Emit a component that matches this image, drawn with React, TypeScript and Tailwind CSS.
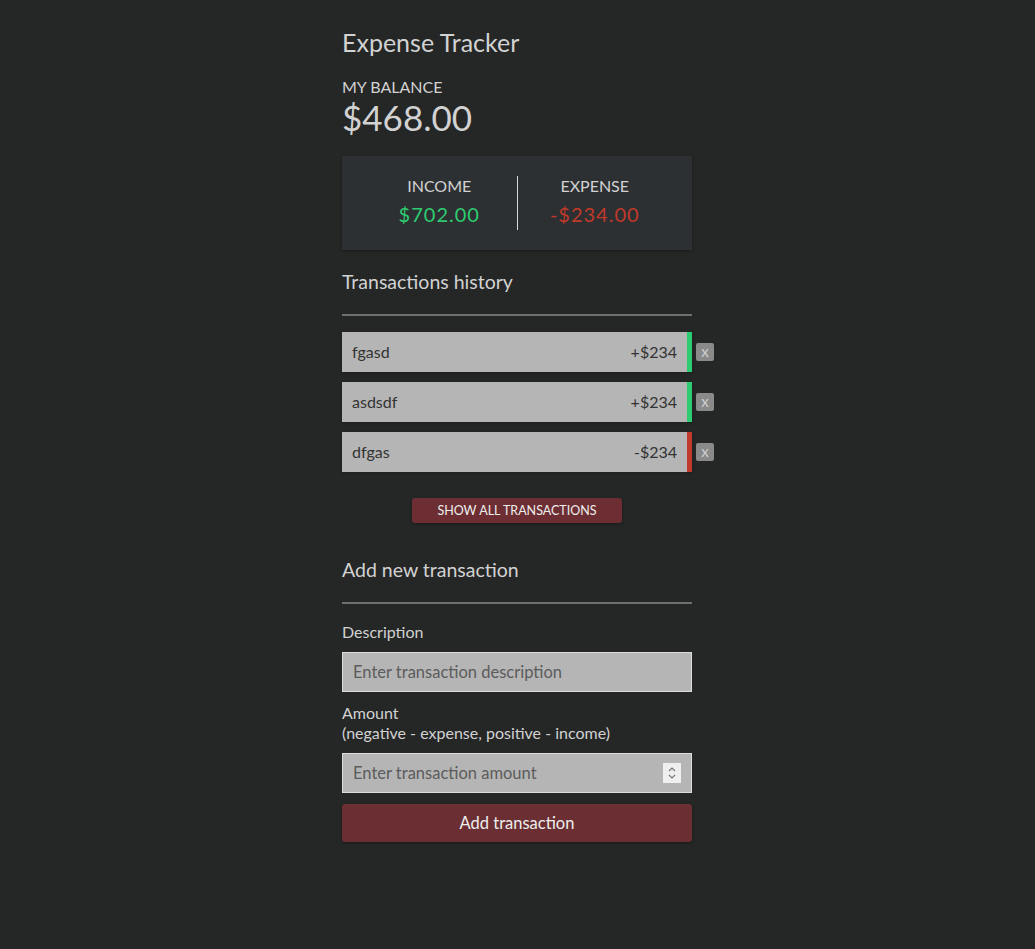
const transactions = [
  { id: 1, text: "fgasd", amount: 234 },
  { id: 2, text: "asdsdf", amount: 234 },
  { id: 3, text: "dfgas", amount: -234 },
];

function TransactionItem({ text, amount }: { text: string; amount: number }) {
  const positive = amount > 0;
  return (
    <li className="relative">
      <div
        className={`flex h-10 items-center justify-between border-r-[5px] bg-[#b5b5b5] pl-2.5 pr-2.5 text-base text-[#333] shadow-[0_1px_3px_rgba(0,0,0,0.25)] ${
          positive ? "border-[#2ecc71]" : "border-[#c0392b]"
        }`}
      >
        <span>{text}</span>
        <span>
          {positive ? "+" : "-"}${Math.abs(amount)}
        </span>
      </div>
      <button className="absolute top-[11px] right-[-22px] flex h-[18px] w-[18px] items-center justify-center rounded-[2px] bg-[#8a8a8a] pb-px text-[15px] leading-none text-[#cfcfcf]">
        x
      </button>
    </li>
  );
}

export default function App() {
  return (
    <div className="min-h-[949px] bg-[#252626] pr-px font-['Lato','Open_Sans',sans-serif] text-[#d2d2d2]">
      <div className="mx-auto w-[350px] pt-[27px] pb-24">
        <h2 className="text-[25px] leading-[30px]">Expense Tracker</h2>

        <h4 className="mt-5 text-base leading-5 uppercase">My Balance</h4>
        <h1 className="text-[35px] leading-10">$468.00</h1>

        <div className="mt-[19px] flex bg-[#2d3032] px-5 py-5 shadow-[0_1px_3px_rgba(0,0,0,0.3)]">
          <div className="flex h-[54px] flex-1 flex-col items-center border-r border-[#d8d8d8]">
            <h4 className="text-base leading-5 uppercase">Income</h4>
            <p className="mt-1 text-xl leading-7 tracking-[1px] text-[#2ecc71]">$702.00</p>
          </div>
          <div className="flex h-[54px] flex-1 flex-col items-center">
            <h4 className="text-base leading-5 uppercase">Expense</h4>
            <p className="mt-1 text-xl leading-7 tracking-[1px] text-[#c0392b]">-$234.00</p>
          </div>
        </div>

        <h3 className="mt-[18px] text-[19.5px] leading-7">Transactions history</h3>
        <div className="mt-[18px] h-0.5 bg-[#6f6f6f]" />

        <ul className="mt-4 flex flex-col gap-2.5">
          {transactions.map((t) => (
            <TransactionItem key={t.id} text={t.text} amount={t.amount} />
          ))}
        </ul>

        <div className="mt-[26px] flex justify-center">
          <button className="h-[25px] w-[210px] rounded-[3px] bg-[#6c2e33] pt-px text-[12.5px] text-[#eee] uppercase shadow-[0_1px_3px_rgba(0,0,0,0.3)]">
            Show all transactions
          </button>
        </div>

        <h3 className="mt-[33px] text-[19.5px] leading-7">Add new transaction</h3>
        <div className="mt-[18px] h-0.5 bg-[#6f6f6f]" />

        <form className="mt-[18px]">
          <label className="block text-base leading-5">Description</label>
          <input
            type="text"
            placeholder="Enter transaction description"
            className="mt-2.5 block h-10 w-full border border-[#dcdcdc] bg-[#b5b5b5] px-2.5 text-[16.5px] text-[#333] outline-none placeholder:text-[#5c5c5c]"
          />

          <label className="mt-[11px] block text-base leading-5">
            Amount
            <br />
            (negative - expense, positive - income)
          </label>
          <div className="relative mt-2.5">
            <input
              type="text"
              inputMode="numeric"
              placeholder="Enter transaction amount"
              className="block h-10 w-full border border-[#dcdcdc] bg-[#b5b5b5] px-2.5 text-[16.5px] text-[#333] outline-none placeholder:text-[#5c5c5c]"
            />
            <span className="absolute top-[10px] right-[11px] flex h-[20px] w-[18px] items-center justify-center bg-[#efefef]">
              <svg width="10" height="14" viewBox="0 0 10 14" fill="none" stroke="#777" strokeWidth="1.2">
                <path d="M2 5 L5 2 L8 5" />
                <path d="M2 9 L5 12 L8 9" />
              </svg>
            </span>
          </div>

          <button
            type="button"
            className="mt-[11px] h-[38px] w-full rounded-[3px] bg-[#6b2e33] text-[16.5px] text-[#eee] shadow-[0_1px_3px_rgba(0,0,0,0.3)]"
          >
            Add transaction
          </button>
        </form>
      </div>
    </div>
  );
}
